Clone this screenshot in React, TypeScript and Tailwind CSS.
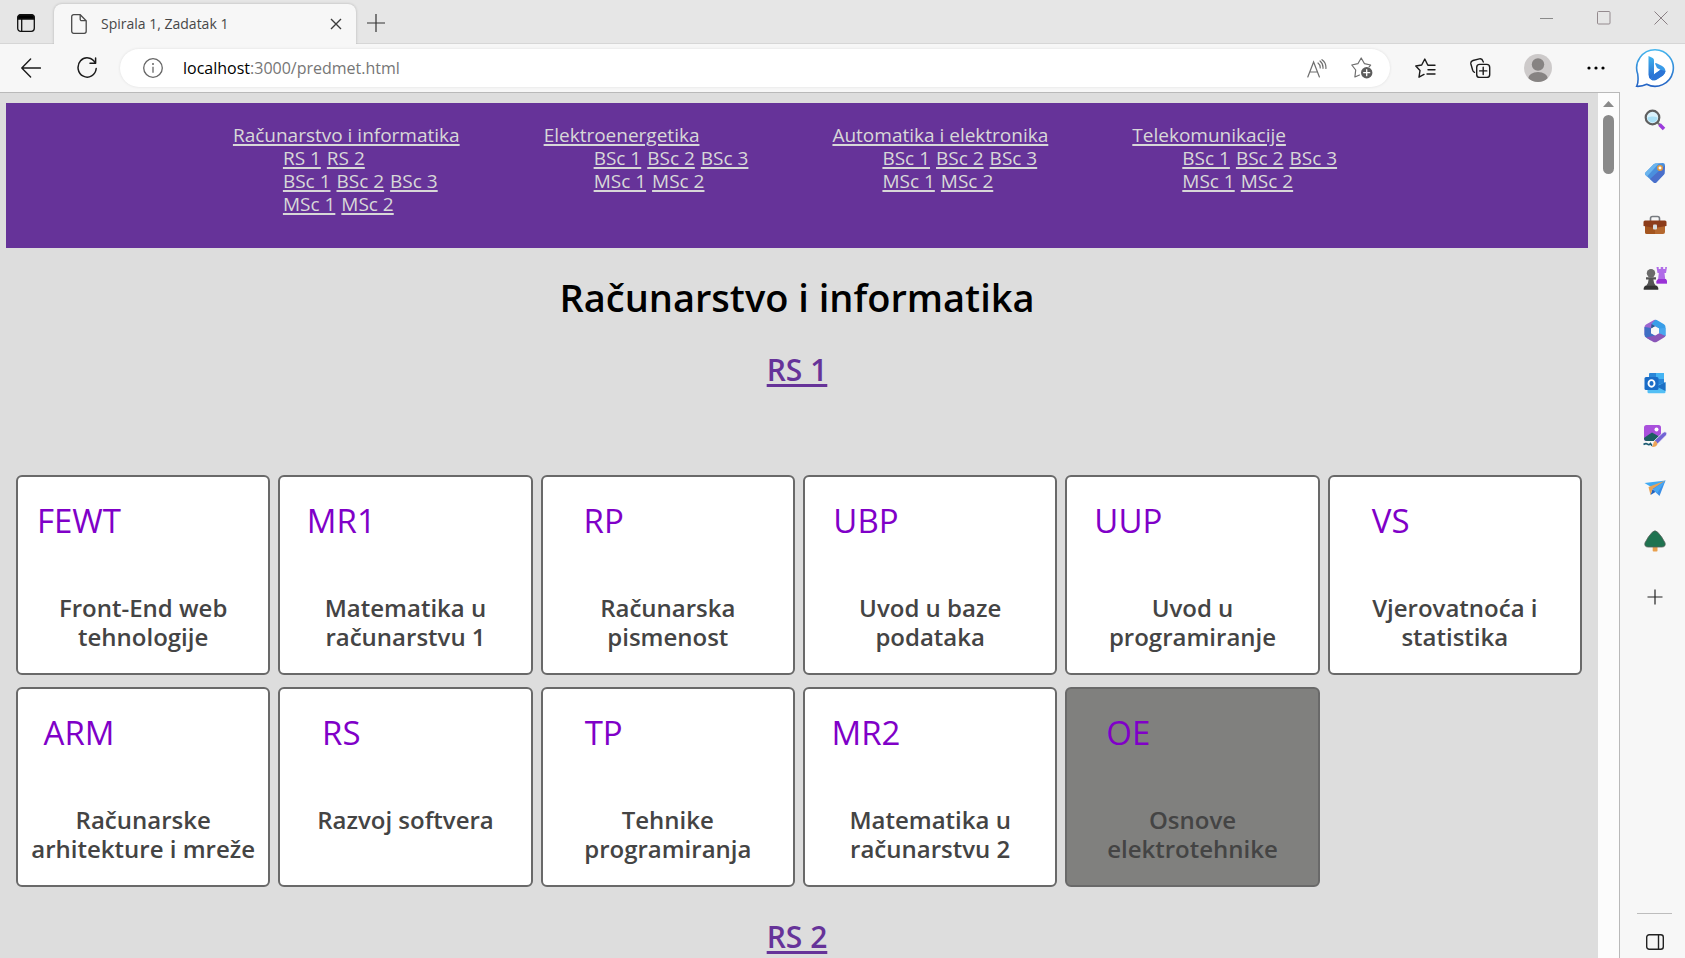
import React from "react";

type Row = string[];
type Programme = { name: string; rows: Row[] };
type Subject = { code: string; name: string; elective?: boolean };

const programmes: Programme[] = [
  { name: "Računarstvo i informatika", rows: [["RS 1", "RS 2"], ["BSc 1", "BSc 2", "BSc 3"], ["MSc 1", "MSc 2"]] },
  { name: "Elektroenergetika", rows: [["BSc 1", "BSc 2", "BSc 3"], ["MSc 1", "MSc 2"]] },
  { name: "Automatika i elektronika", rows: [["BSc 1", "BSc 2", "BSc 3"], ["MSc 1", "MSc 2"]] },
  { name: "Telekomunikacije", rows: [["BSc 1", "BSc 2", "BSc 3"], ["MSc 1", "MSc 2"]] },
];

const subjects: Subject[] = [
  { code: "FEWT", name: "Front-End web tehnologije" },
  { code: "MR1", name: "Matematika u računarstvu 1" },
  { code: "RP", name: "Računarska pismenost" },
  { code: "UBP", name: "Uvod u baze podataka" },
  { code: "UUP", name: "Uvod u programiranje" },
  { code: "VS", name: "Vjerovatnoća i statistika" },
  { code: "ARM", name: "Računarske arhitekture i mreže" },
  { code: "RS", name: "Razvoj softvera" },
  { code: "TP", name: "Tehnike programiranja" },
  { code: "MR2", name: "Matematika u računarstvu 2" },
  { code: "OE", name: "Osnove elektrotehnike", elective: true },
];

function IconButton({ label, className = "", children }: { label: string; className?: string; children: React.ReactNode }) {
  return (
    <button type="button" aria-label={label} className={`flex shrink-0 items-center justify-center ${className}`}>
      {children}
    </button>
  );
}

function TabBar() {
  return (
    <header className="flex h-11 shrink-0 items-end border-b border-[#d6d6d6] bg-[#e6e6e6]">
      <IconButton label="Tab actions" className="h-10 w-[52px]">
        <svg width="18" height="18" viewBox="0 0 18 18" fill="none" stroke="#111" strokeWidth="1.3">
          <rect x="0.7" y="0.7" width="16.6" height="16.6" rx="3" />
          <path d="M1 5V3.5A2.5 2.5 0 0 1 3.500 1h11A2.500 2.500 0 0 1 17 3.500V5z" fill="#000" />
          <path d="M4.700 5v12" />
        </svg>
      </IconButton>
      <div className="-mb-px ml-0.5 flex h-10 w-[302px] items-center rounded-t-lg bg-[#f7f7f7] pl-[17px] shadow-[0_0_3px_rgba(0,0,0,0.22)] [clip-path:inset(-4px_-4px_0_-4px)]">
        <svg width="16" height="20" viewBox="0 0 16 20" fill="none" stroke="#4a4a4a" strokeWidth="1.300">
          <path d="M2.700 0.700h6.500l6 6v10.600a2 2 0 0 1-2 2H2.700a2 2 0 0 1-2-2V2.700a2 2 0 0 1 2-2z" />
          <path d="M9.200 0.900v4.300a1.500 1.500 0 0 0 1.500 1.500h4.300" />
        </svg>
        <span className="ml-3.5 flex-1 text-sm text-[#474747]">Spirala 1, Zadatak 1</span>
        <IconButton label="Close tab" className="mr-1 size-8">
          <svg width="12" height="12" viewBox="0 0 12 12" stroke="#3c3c3c" strokeWidth="1.400">
            <path d="M1 1l10 10M11 1L1 11" />
          </svg>
        </IconButton>
      </div>
      <IconButton label="New tab" className="h-10 w-10">
        <svg width="18" height="18" viewBox="0 0 18 18" stroke="#333" strokeWidth="1.200">
          <path d="M9 0v18M0 9h18" />
        </svg>
      </IconButton>
      <div className="ml-auto flex h-9 self-start">
        <IconButton label="Minimize" className="w-[57px]">
          <svg width="14" height="14" viewBox="0 0 14 14" stroke="#8a8a8a" fill="none"><path d="M0 7.500h13" /></svg>
        </IconButton>
        <IconButton label="Maximize" className="w-[57px]">
          <svg width="14" height="14" viewBox="0 0 14 14" stroke="#948a8e" fill="none"><rect x="0.500" y="0.500" width="12.500" height="12.500" rx="1" /></svg>
        </IconButton>
        <IconButton label="Close" className="-mr-1 w-[57px]">
          <svg width="14" height="14" viewBox="0 0 14 14" stroke="#8a8084" fill="none"><path d="M0.500 0.500l13 13M13.500 0.500l-13 13" /></svg>
        </IconButton>
      </div>
    </header>
  );
}

function Toolbar() {
  return (
    <div className="flex h-12 shrink-0 items-center bg-[#f7f7f7] pl-2.5">
      <IconButton label="Back" className="size-[42px]">
        <svg width="20" height="20" viewBox="0 0 20 20" fill="none" stroke="#1b1b1b" strokeWidth="1.400" strokeLinecap="round" strokeLinejoin="round">
          <path d="M9.600 1L0.800 10l8.800 9M1 10h18.400" />
        </svg>
      </IconButton>
      <IconButton label="Refresh" className="ml-3.5 size-[42px]">
        <svg width="20" height="22" viewBox="0 0 20 22" fill="none" stroke="#1b1b1b" strokeWidth="1.500" strokeLinecap="round" strokeLinejoin="round">
          <path d="M18.600 1v5.200h-5.600" />
          <path d="M18.200 6A9.100 9.600 0 1 0 19.200 11.500" />
        </svg>
      </IconButton>
      <div className="ml-3 flex h-[38px] min-w-0 flex-1 items-center rounded-full bg-white pl-[23px] shadow-[0_0_3px_rgba(0,0,0,0.1)]">
        <IconButton label="Site information" className="size-5">
          <svg width="20" height="20" viewBox="0 0 20 20" fill="none" stroke="#666" strokeWidth="1.300">
            <circle cx="10" cy="10" r="9.300" />
            <path d="M10 8.800v6" />
            <circle cx="10" cy="6" r="1" fill="#666" stroke="none" />
          </svg>
        </IconButton>
        <span className="ml-5 flex-1 truncate text-base text-[#767676]">
          <span className="text-black">localhost</span>:3000/predmet.html
        </span>
        <IconButton label="Read aloud" className="w-[45px]">
          <svg width="20" height="19" viewBox="0 0 20 19" fill="none" stroke="#6e6e6e" strokeWidth="1.200" strokeLinecap="round">
            <path d="M0.800 18L6.600 3l5.800 15M2.800 13h7.600" />
            <path d="M11 4c1.500 1.200 2.400 3 2.200 5M13 2c2 1.600 3.200 4 3 7.300M15 0.700c2.700 1.900 4.200 5 3.900 8.800" />
          </svg>
        </IconButton>
        <IconButton label="Add to favourites" className="mr-1.5 w-[45px]">
          <svg width="22" height="22" viewBox="0 0 22 22" fill="none" stroke="#6e6e6e" strokeWidth="1.200" strokeLinejoin="round" strokeLinecap="round">
            <path d="M8.500 18l-4.600 2 .8-7L0.800 8l6.100-1.300L10.200 1l3.300 5.700L19.600 8l-1.500 1.800" />
            <circle cx="15.700" cy="15.700" r="5.700" fill="#5c5c5c" stroke="none" />
            <path d="M15.700 12.700v6M12.700 15.700h6" stroke="#fff" strokeWidth="1.300" />
          </svg>
        </IconButton>
      </div>
      <div className="-mr-1 ml-2 flex items-center">
        <IconButton label="Favourites" className="w-[55px]">
          <svg width="21" height="20" viewBox="0 0 21 20" fill="none" stroke="#1b1b1b" strokeWidth="1.400" strokeLinejoin="round" strokeLinecap="round">
            <path d="M9 16.400L4 19.200l1-6.700L0.800 8l5.900-1L9.800 1l2.800 5.700" />
            <path d="M13 7.200h7M13 11.700h7M12 16h8" />
          </svg>
        </IconButton>
        <IconButton label="Collections" className="w-[55px]">
          <svg width="21" height="20" viewBox="0 0 21 20" fill="none" stroke="#1b1b1b" strokeWidth="1.400" strokeLinejoin="round" strokeLinecap="round">
            <rect x="6.700" y="6.400" width="13" height="13" rx="3" />
            <path d="M13.200 9.300v7.200M9.600 12.900h7.200" />
            <path d="M4.500 14.300A3 3 0 0 1 2.600 12L0.900 6A3 3 0 0 1 3 2.500L9.300 0.900A3 3 0 0 1 12.900 3l.4 1" />
          </svg>
        </IconButton>
        <IconButton label="Profile" className="w-[59px]">
          <svg width="28" height="28" viewBox="0 0 28 28">
            <clipPath id="avatar"><circle cx="14" cy="14" r="14" /></clipPath>
            <g clipPath="url(#avatar)">
              <rect width="28" height="28" fill="#cdcaca" />
              <circle cx="14" cy="10.500" r="6.200" fill="#868382" />
              <ellipse cx="14" cy="25" rx="10" ry="7" fill="#868382" />
            </g>
          </svg>
        </IconButton>
        <IconButton label="Settings and more" className="w-[57px]">
          <svg width="18" height="4" viewBox="0 0 18 4"><circle cx="2" cy="2" r="1.600" /><circle cx="9" cy="2" r="1.600" /><circle cx="16" cy="2" r="1.600" /></svg>
        </IconButton>
      </div>
    </div>
  );
}

const apps: { label: string; icon: React.ReactNode }[] = [
  {
    label: "Search",
    icon: (
      <svg width="22" height="22" viewBox="0 0 22 22">
        <path d="M13 13l3 3" stroke="#777" strokeWidth="2" />
        <path d="M15.500 15.500l4.500 4.500" stroke="#9b3bdc" strokeWidth="3.600" />
        <circle cx="8.500" cy="8.500" r="6.800" fill="#d9f2fc" stroke="#5f5f5f" strokeWidth="2.200" />
        <path d="M3.500 8.500c3-1.500 7-1.500 10 0a5 5 0 0 1-10 0z" fill="#a9e0f6" />
      </svg>
    ),
  },
  {
    label: "Shopping",
    icon: (
      <svg width="22" height="22" viewBox="0 0 22 22">
        <path d="M11.500 1.500L19 1q2.200 0 2 2.500l-.5 7.500q0 1-.8 1.800l-7.400 7.600q-1.300 1.200-2.600 0L1.500 13q-1.200-1.400 0-2.600L9.700 2.200q.7-.6 1.800-.7z" fill="#4a8fdd" />
        <path d="M21 3.500l-.5 7.500q0 1-.8 1.800l-7.400 7.600q-1.300 1.200-2.600 0L6 17z" fill="#4a6fcb" />
        <path d="M1.500 10.400L9.700 2.200l1.800-.7L15 1.200 3 14.500 1.500 13q-1.200-1.400 0-2.600z" fill="#6bb5ee" />
        <circle cx="16" cy="6" r="2.200" fill="#fff" stroke="#e59a3c" strokeWidth="1.500" />
      </svg>
    ),
  },
  {
    label: "Tools",
    icon: (
      <svg width="24" height="20" viewBox="0 0 24 20">
        <path d="M7.500 6V3.500q0-2 2-2h5q2 0 2 2V6" fill="none" stroke="#777b80" strokeWidth="1.600" />
        <path d="M2 9h20v8q0 2-2 2H4q-2 0-2-2z" fill="#b5682f" />
        <path d="M2 9h10v10H4q-2 0-2-2z" fill="#a4551f" />
        <path d="M2 5.500h20q1.500 0 1.500 1.500v4l-9 1.500h-5L0.500 11V7Q0.500 5.500 2 5.500z" fill="#8c3c1a" />
        <rect x="10" y="9.500" width="4" height="5" rx="1" fill="#d7dde0" />
      </svg>
    ),
  },
  {
    label: "Games",
    icon: (
      <svg width="24" height="24" viewBox="0 0 24 24">
        <path d="M13.500 1h2.200v2h2V1h2.500v2h2V1H24l-1 6h-1.500l.8 7 1.700 1v2.500H13.500V15l1.500-1 .8-7H14.500z" fill="#b06be8" />
        <path d="M15 13h8l1 2v2.500H13.500V15z" fill="#9a32d6" />
        <circle cx="8" cy="7.200" r="4.200" fill="#6b6b6b" />
        <path d="M3 11.300h10v2.300h-2.600q0 4 2.600 6.400v1H3v-1q2.600-2.400 2.600-6.400H3z" fill="#555" />
        <path d="M2 19.800h12l1.300 2.200v1.700H0.700V22z" fill="#333" />
      </svg>
    ),
  },
  {
    label: "Microsoft 365",
    icon: (
      <svg width="22" height="24" viewBox="0 0 22 24">
        <path d="M10 1L2 5.500Q0.500 6.500 0.500 8v8L7 12.500V9l8-4.800L12.500 1.300Q11.300 0.300 10 1z" fill="#9d66d0" />
        <path d="M11 1q1-.5 2.200.2L20 5.300q1.500 1 1.500 2.700v8q0 1.200-.8 2L15 14V9.500L7.500 5z" fill="#399ee8" />
        <path d="M0.500 8v8q0 1.600 1.500 2.600l5 3 4.500-5L7 14V9z" fill="#3f6fc4" />
        <path d="M2 18.600l7 4.200q2 1 4 0l7-4.200q1.500-1 1.500-2.600L15 14l-4 2.500z" fill="#8a55b8" />
        <path d="M15 9.500V14l6.500 3V9z" fill="#4aa7ee" />
        <path d="M7.500 5L15 9.500 11 7.500 7 9.800z" fill="#2b5a94" />
        <path d="M11 7.500l4 2.300v4.400l-4 2.300-4-2.300V9.800z" fill="#f7f7f7" />
      </svg>
    ),
  },
  {
    label: "Outlook",
    icon: (
      <svg width="22" height="22" viewBox="0 0 22 22">
        <rect x="5" y="1" width="15" height="13" rx="1" fill="#2a86d8" />
        <path d="M12 1h8v6h-8z" fill="#45b4f3" />
        <path d="M3.500 12.500l8.500 1 9.500-3V20q0 1.300-1.300 1.300H4.800q-1.300 0-1.300-1.300z" fill="#53bff5" />
        <path d="M12.500 14.500l9-4.500v9z" fill="#1d6fc4" />
        <rect x="0.500" y="5" width="14" height="13" rx="1.500" fill="#1a6cc7" />
        <ellipse cx="7.500" cy="11.400" rx="3" ry="3.300" fill="none" stroke="#fff" strokeWidth="1.900" />
      </svg>
    ),
  },
  {
    label: "Image Creator",
    icon: (
      <svg width="24" height="24" viewBox="0 0 24 24">
        <rect x="1" y="1" width="17" height="16" rx="2.500" fill="#a950dc" />
        <path d="M1 14q4-3 8-5.500l8 4.500-4 4H3.500Q1 17 1 14z" fill="#1c5e62" />
        <circle cx="13.500" cy="5.500" r="2" fill="#fff" />
        <path d="M0 17.500h14v6H0z" fill="#f7f7f7" />
        <path d="M0.500 20.500q2.500-1.500 4-.3t3-.7l1.500 2.300" fill="none" stroke="#1b5a72" strokeWidth="1.600" />
        <path d="M11 17L20 8.500q2-1.500 3.500 0 1 1.500-.5 3L14.500 20z" fill="#7164d4" stroke="#f7f7f7" strokeWidth="0.800" />
        <path d="M14.500 20q-1 3.500-6 3 2-1 1.700-3 .3-3 2.800-3z" fill="#eea557" />
      </svg>
    ),
  },
  {
    label: "Drop",
    icon: (
      <svg width="22" height="18" viewBox="0 0 22 18">
        <path d="M0.500 4L21.500 1.500 8 8.500z" fill="#41aaf2" />
        <path d="M21.500 1.500L15.500 17l-4-4-4-4.500z" fill="#3b8fe6" />
        <path d="M8.500 10l3 3-5 3z" fill="#1f63c0" />
        <path d="M21.500 1.500L8.500 10l-2 6L4.500 8z" fill="#e9a254" />
        <path d="M21.500 1.500L9.500 10l3.500 4.500z" fill="#49a8f3" />
      </svg>
    ),
  },
  {
    label: "Tree",
    icon: (
      <svg width="22" height="22" viewBox="0 0 22 22">
        <rect x="8.700" y="15" width="4.800" height="6.500" rx="0.800" fill="#e9a04e" />
        <path d="M8.200 2.300q2.800-3 5.600 0 4 4 7.200 10.500 1 4-3 4.200H4q-4-.2-3-4.200Q4.200 6.300 8.200 2.300z" fill="#1f7350" stroke="#55615b" strokeWidth="0.800" />
      </svg>
    ),
  },
];

function Sidebar() {
  return (
    <aside className="flex w-[65px] shrink-0 flex-col items-center bg-[#f7f7f7] pt-1 pl-1">
      <IconButton label="Bing" className="h-10 w-10">
        <svg width="40" height="40" viewBox="0 0 40 40">
          <defs>
            <linearGradient id="bubble" x1="0" y1="0" x2="0" y2="1"><stop stopColor="#46b6ee" /><stop offset="1" stopColor="#2463c4" /></linearGradient>
            <linearGradient id="bing" x1="0" y1="0" x2="0" y2="1"><stop stopColor="#3fb4ee" /><stop offset="1" stopColor="#2668cf" /></linearGradient>
          </defs>
          <path d="M20 1.700a18.300 18.300 0 1 1-8.300 34.600Q7 38.600 1.700 38.300 3.800 34.500 2.700 26A18.300 18.300 0 0 1 20 1.700z" fill="#fff" stroke="url(#bubble)" strokeWidth="1.600" />
          <path d="M13.500 8l4.200 2q1.300.7 1.300 2.300v14L16 31.500q-2.500-1.500-2.500-4.700z" fill="url(#bing)" />
          <path d="M21.500 15.300q-1.800-.8-1.200 1l1.700 3.700 3.500 1.800-6 4.200q-2.700 1.500-3.500 5.500 2.500 1.700 5.800 0l6.200-4q3.800-3.500 1.700-7-1-1.700-3-2.700z" fill="#3a9be8" />
          <path d="M25.500 21.800l-6 4.200q-2.700 1.500-3.500 5.500 2.500 1.700 5.800 0l6.200-4q2.300-2.100 2.500-4.500z" fill="#2b74d6" />
        </svg>
      </IconButton>
      <div className="mt-4 flex h-[453px] flex-col justify-between">
        {apps.map((a) => (
          <IconButton key={a.label} label={a.label} className="size-8">{a.icon}</IconButton>
        ))}
      </div>
      <IconButton label="Add site" className="mt-6 size-8">
        <svg width="16" height="16" viewBox="0 0 16 16" stroke="#222" strokeWidth="1.200"><path d="M8 0.500v15M0.500 8h15" /></svg>
      </IconButton>
      <div className="mt-auto w-[35px] border-t border-[#bdbdbd]" />
      <IconButton label="Show sidebar" className="mt-3 size-8">
        <svg width="18" height="16" viewBox="0 0 18 16" fill="none" stroke="#222" strokeWidth="1.400">
          <rect x="0.700" y="0.700" width="16.600" height="14.600" rx="2.500" /><path d="M12.500 1v14" />
        </svg>
      </IconButton>
    </aside>
  );
}

function ProgrammeNav() {
  return (
    <nav className="mt-2.5 flex h-[145px] justify-center gap-[84px] bg-[#663399] pt-[21px] pr-6 text-[19px] leading-[23px] text-[#d8d8d8]">
      {programmes.map((p) => (
        <div key={p.name}>
          <a href="#" className="underline decoration-2 underline-offset-2">{p.name}</a>
          <ul className="pl-[50px]">
            {p.rows.map((row) => (
              <li key={row[0]} className="flex gap-1.5">
                {row.map((r) => (
                  <a key={r} href="#" className="underline decoration-2 underline-offset-2">{r}</a>
                ))}
              </li>
            ))}
          </ul>
        </div>
      ))}
    </nav>
  );
}

function SubjectCard({ subject }: { subject: Subject }) {
  return (
    <article className={`h-[200px] rounded-md border-2 border-[#696969] pt-6 ${subject.elective ? "bg-[#80807e]" : "bg-white"}`}>
      <div className="w-[122px] text-center text-[33px] leading-10 text-[#8000c8]">{subject.code}</div>
      <h3 className="mt-[52px] px-1 text-center text-2xl leading-[29px] font-semibold text-[#444]">{subject.name}</h3>
    </article>
  );
}

function ScrollBar() {
  return (
    <div className="flex w-[21px] shrink-0 flex-col items-center bg-[#fcfcfc] pt-2">
      <svg width="11" height="6" viewBox="0 0 11 6" fill="#8a8a8a"><path d="M0 6L5.500 0 11 6z" /></svg>
      <div className="mt-2 h-[59px] w-[11px] rounded-full bg-[#8a8a8a]" />
    </div>
  );
}

export default function App() {
  return (
    <div className="flex h-screen flex-col overflow-hidden font-['Open_Sans',sans-serif]">
      <TabBar />
      <div className="flex min-h-0 flex-1">
        <div className="flex min-w-0 flex-1 flex-col">
          <Toolbar />
          <div className="flex min-h-0 flex-1 border-t border-r border-[#b9b9b9] bg-[#ddd]">
            <main className="min-w-0 flex-1 overflow-hidden pr-2.5 pl-1.5">
              <ProgrammeNav />
              <h1 className="mt-[26px] text-center text-[38px] leading-[46px] font-semibold text-black">Računarstvo i informatika</h1>
              <h2 className="mt-8 text-center text-3xl leading-[35px] font-semibold text-[#663399]">
                <a href="#" className="underline decoration-3 underline-offset-3">RS 1</a>
              </h2>
              <section className="mt-[88px] grid grid-cols-6 gap-x-2 gap-y-3 pr-1.5 pl-2.5">
                {subjects.map((s) => <SubjectCard key={s.code} subject={s} />)}
              </section>
              <h2 className="mt-8 text-center text-3xl leading-[35px] font-semibold text-[#663399]">
                <a href="#" className="underline decoration-3 underline-offset-3">RS 2</a>
              </h2>
            </main>
            <ScrollBar />
          </div>
        </div>
        <Sidebar />
      </div>
    </div>
  );
}
